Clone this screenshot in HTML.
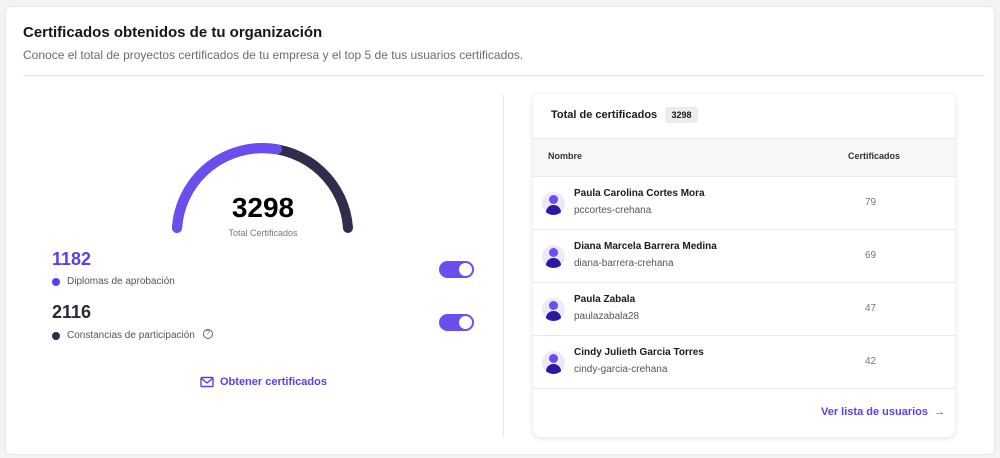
<!DOCTYPE html><html><head><style>
*{margin:0;padding:0;box-sizing:border-box}
body{width:1000px;height:458px;background:#f3f3f4;font-family:"Liberation Sans",sans-serif;position:relative;overflow:hidden;color:#1a1a22}
.card{position:absolute;left:5px;top:6px;width:990px;height:449px;background:#fff;border-radius:6px;border:1px solid #e8e8ea}
.a{position:absolute}
.t{left:23px;top:24px;font-size:15px;font-weight:bold;color:#15151f}
.s{left:23px;top:48px;font-size:12px;color:#6b6b75}
.hr{left:23px;top:75px;width:962px;height:1px;background:#e2e2e4}
.vr{left:503px;top:95px;width:1px;height:342px;background:#e6e6e8}
.tog{width:35px;height:17px;border-radius:9px;background:#6b4ef0}
.tog::after{content:"";position:absolute;right:2px;top:2px;width:13px;height:13px;border-radius:50%;background:#fff}
.rc{left:533px;top:94px;width:422px;height:343px;background:#fff;border-radius:8px;box-shadow:0 1px 6px rgba(0,0,0,.12);overflow:hidden}
.row{position:absolute;left:0;width:422px;height:53px;border-top:1px solid #e8e8ea}
.av{position:absolute;left:9px;top:15px;width:23px;height:23px;border-radius:50%;background:#ede8fd;overflow:hidden}
.av::before{content:"";position:absolute;left:7px;top:3px;width:9px;height:9px;border-radius:50%;background:#6b4ef0}
.av::after{content:"";position:absolute;left:4px;top:13px;width:15px;height:10px;border-radius:8px 8px 3px 3px;background:#2b1aa0}
.nm{position:absolute;left:41px;top:11px;font-size:10px;font-weight:bold}
.us{position:absolute;left:41px;top:28px;font-size:10px;color:#555}
.nu{position:absolute;left:332px;top:20px;font-size:10px;color:#777}
</style></head><body>
<div class="card"></div>
<div class="a t">Certificados obtenidos de tu organización</div>
<div class="a s">Conoce el total de proyectos certificados de tu empresa y el top 5 de tus usuarios certificados.</div>
<div class="a hr"></div>
<div class="a vr"></div>
<svg class="a" style="left:0;top:0" width="500" height="300">
<path d="M177 228 A85.7 85.7 0 0 1 348 228" fill="none" stroke="#2f2d4a" stroke-width="10" stroke-linecap="round"/>
<path d="M177 228 A85.7 85.7 0 0 1 277 149.2" fill="none" stroke="#6b4ef0" stroke-width="10" stroke-linecap="round"/>
</svg>
<div class="a" style="left:200px;top:192px;width:126px;text-align:center;font-size:28px;font-weight:bold;color:#000">3298</div>
<div class="a" style="left:200px;top:228px;width:126px;text-align:center;font-size:9px;color:#777">Total Certificados</div>
<div class="a" style="left:52px;top:249px;font-size:18px;font-weight:bold;color:#5b3ef0">1182</div>
<div class="a" style="left:52px;top:278px;width:8px;height:8px;border-radius:50%;background:#5b3ef0"></div>
<div class="a" style="left:67px;top:276px;font-size:10px;color:#555">Diplomas de aprobación</div>
<div class="a tog" style="left:439px;top:261px"></div>
<div class="a" style="left:52px;top:302px;font-size:18px;font-weight:bold;color:#2a2a33">2116</div>
<div class="a" style="left:52px;top:332px;width:8px;height:8px;border-radius:50%;background:#2f2d4a"></div>
<div class="a" style="left:67px;top:330px;font-size:10px;color:#555">Constancias de participación</div>
<div class="a" style="left:203px;top:329px;width:10px;height:10px;border:1px solid #666;border-radius:50%;font-size:7px;text-align:center;line-height:8px;color:#666">?</div>
<div class="a tog" style="left:439px;top:314px"></div>
<svg class="a" style="left:200px;top:376px" width="14" height="13"><rect x="1" y="1.5" width="12" height="9" rx="1" fill="none" stroke="#5b3ef0" stroke-width="1.4"/><path d="M1.5 2.5 L7 7 L12.5 2.5" fill="none" stroke="#5b3ef0" stroke-width="1.4"/></svg>
<div class="a" style="left:220px;top:376px;font-size:11px;font-weight:bold;color:#5b3ef0">Obtener certificados</div>
<div class="a rc">
<div class="a" style="left:18px;top:15px;font-size:11px;font-weight:bold">Total de certificados</div>
<div class="a" style="left:132px;top:13px;width:33px;height:16px;border-radius:3px;background:#ececee;font-size:9px;font-weight:bold;text-align:center;line-height:16px">3298</div>
<div class="a" style="left:0;top:44px;width:422px;height:38px;background:#f6f7f9;border-top:1px solid #e8e8ea"></div>
<div class="a" style="left:15px;top:57px;font-size:9px;font-weight:bold;color:#333">Nombre</div>
<div class="a" style="left:315px;top:57px;font-size:9px;font-weight:bold;color:#333">Certificados</div>
<div class="row" style="top:82px"><div class="av"></div><div class="nm">Paula Carolina Cortes Mora</div><div class="us">pccortes-crehana</div><div class="nu">79</div></div>
<div class="row" style="top:135px"><div class="av"></div><div class="nm">Diana Marcela Barrera Medina</div><div class="us">diana-barrera-crehana</div><div class="nu">69</div></div>
<div class="row" style="top:188px"><div class="av"></div><div class="nm">Paula Zabala</div><div class="us">paulazabala28</div><div class="nu">47</div></div>
<div class="row" style="top:241px"><div class="av"></div><div class="nm">Cindy Julieth Garcia Torres</div><div class="us">cindy-garcia-crehana</div><div class="nu">42</div></div>
<div class="row" style="top:294px;border-top:1px solid #e8e8ea"></div>
<div class="a" style="left:288px;top:312px;font-size:11px;font-weight:bold;color:#5b3ef0">Ver lista de usuarios &nbsp;→</div>
</div>
</body></html>
